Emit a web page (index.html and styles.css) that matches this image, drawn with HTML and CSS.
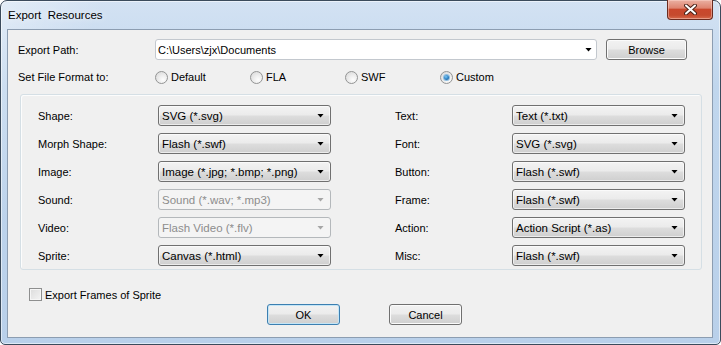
FILE: index.html
```html
<!doctype html>
<html lang="en">
  <head>
    <meta charset="UTF-8" />
    <title>Export Resources</title>
    <link rel="stylesheet" href="styles.css">
  </head>
  <body>
    <div class="window">
      <!-- Title bar -->
      <div class="titlebar">
        <span class="title">Export&nbsp; Resources</span>
        <div class="close-btn">
          <svg width="13" height="11" viewBox="0 0 13 11">
            <path d="M2 1.5 L11 9.5 M11 1.5 L2 9.5" stroke="#4a2218" stroke-width="4" stroke-linecap="round" />
            <path d="M2 1.5 L11 9.5 M11 1.5 L2 9.5" stroke="#fff" stroke-width="2" stroke-linecap="round" />
          </svg>
        </div>
      </div>

      <div class="client">
        <!-- Export path -->
        <div class="path-row">
          <span class="row-label">Export Path:</span>
          <div class="combo edit">C:\Users\zjx\Documents<span class="arrow"></span></div>
          <button class="btn browse">Browse</button>
        </div>

        <!-- Format radios -->
        <div class="format-row">
          <span class="row-label">Set File Format to:</span>
          <label class="radio-item"><span class="radio"></span>Default</label>
          <label class="radio-item"><span class="radio"></span>FLA</label>
          <label class="radio-item"><span class="radio"></span>SWF</label>
          <label class="radio-item"><span class="radio checked"></span>Custom</label>
        </div>

        <!-- Per-type formats -->
        <div class="group">
          <div class="format-grid">
            <span class="field-label">Shape:</span>
            <div class="combo">SVG (*.svg)<span class="arrow"></span></div>
            <span></span>
            <span class="field-label">Text:</span>
            <div class="combo">Text (*.txt)<span class="arrow"></span></div>

            <span class="field-label">Morph Shape:</span>
            <div class="combo">Flash (*.swf)<span class="arrow"></span></div>
            <span></span>
            <span class="field-label">Font:</span>
            <div class="combo">SVG (*.svg)<span class="arrow"></span></div>

            <span class="field-label">Image:</span>
            <div class="combo">Image (*.jpg; *.bmp; *.png)<span class="arrow"></span></div>
            <span></span>
            <span class="field-label">Button:</span>
            <div class="combo">Flash (*.swf)<span class="arrow"></span></div>

            <span class="field-label">Sound:</span>
            <div class="combo disabled">Sound (*.wav; *.mp3)<span class="arrow"></span></div>
            <span></span>
            <span class="field-label">Frame:</span>
            <div class="combo">Flash (*.swf)<span class="arrow"></span></div>

            <span class="field-label">Video:</span>
            <div class="combo disabled">Flash Video (*.flv)<span class="arrow"></span></div>
            <span></span>
            <span class="field-label">Action:</span>
            <div class="combo">Action Script (*.as)<span class="arrow"></span></div>

            <span class="field-label">Sprite:</span>
            <div class="combo">Canvas (*.html)<span class="arrow"></span></div>
            <span></span>
            <span class="field-label">Misc:</span>
            <div class="combo">Flash (*.swf)<span class="arrow"></span></div>
          </div>
        </div>

        <label class="check-row"><span class="checkbox"></span>Export Frames of Sprite</label>

        <div class="dialog-buttons">
          <button class="btn default">OK</button>
          <button class="btn">Cancel</button>
        </div>
      </div>
    </div>
  </body>
</html>
```

FILE: styles.css
```css
body {
  margin: 0;
  font-family: 'Liberation Sans', Arial, sans-serif;
  font-size: 11px;
  color: #000;
  background: #fff;
}

/* Window frame */
.window {
  box-sizing: border-box;
  width: 721px;
  height: 345px;
  border: 1px solid #3b4b5c;
  border-radius: 7px 7px 5px 5px;
  padding: 0 7px 6px 6px;
  background:
    linear-gradient(115deg, rgba(255, 255, 255, 0.35) 0%, rgba(255, 255, 255, 0) 12%),
    linear-gradient(180deg, #d3e2f3 0%, #c0d6ed 25%, #b9d0ea 100%);
  box-shadow: inset 0 0 0 1px rgba(255, 255, 255, 0.55);
}

.titlebar {
  height: 28px;
  display: flex;
  align-items: flex-start;
  justify-content: space-between;
}

.title {
  font-size: 11.5px;
  margin: 8px 0 0 1px;
  text-shadow: 0 0 6px rgba(255, 255, 255, 0.9);
}

.close-btn {
  box-sizing: border-box;
  width: 46px;
  height: 20px;
  margin-top: -1px;
  border: 1px solid #6b2b1f;
  border-top: none;
  border-radius: 0 0 4px 4px;
  background: linear-gradient(180deg, #eab0a2 0%, #de8470 42%, #c9472c 50%, #c54a2e 80%, #d66a4c 100%);
  box-shadow: inset 0 0 0 1px rgba(255, 220, 210, 0.45);
  display: flex;
  align-items: center;
  justify-content: center;
}

/* Client area */
.client {
  box-sizing: border-box;
  width: 706px;
  height: 309px;
  border: 1px solid #8c9db1;
  background: #f0f0f0;
}

.path-row {
  display: flex;
  align-items: center;
  height: 21px;
  margin-top: 9px;
  padding-left: 10px;
}

.row-label {
  width: 137px;
  flex: none;
}

.combo {
  box-sizing: border-box;
  height: 21px;
  display: flex;
  align-items: center;
  padding: 0 6px 0 3px;
  font-size: 11.5px;
  border: 1px solid #707070;
  border-radius: 3px;
  background: linear-gradient(180deg, #f3f3f3 0%, #ebebeb 48%, #dddddd 52%, #cfcfcf 100%);
  box-shadow: inset 0 0 0 1px rgba(255, 255, 255, 0.6);
  white-space: nowrap;
}

.arrow {
  width: 7px;
  height: 4px;
  margin-left: auto;
  background: #000;
  clip-path: polygon(0 0, 100% 0, 50% 100%);
}

.combo.edit {
  width: 442px;
  font-size: 11px;
  background: #fff;
  border-color: #c3c8ce;
  box-shadow: none;
  padding: 0 4px 0 2px;
}

.combo.disabled {
  color: #8d8d8d;
  border-color: #b4b8bb;
  background: #f4f4f4;
  box-shadow: none;
}

.combo.disabled .arrow {
  background: #a6a6a6;
}

.btn {
  box-sizing: border-box;
  height: 21px;
  font-family: inherit;
  font-size: 11px;
  color: #000;
  border: 1px solid #707070;
  border-radius: 3px;
  background: linear-gradient(180deg, #f2f2f2 0%, #ebebeb 48%, #dddddd 52%, #cfcfcf 100%);
  box-shadow: inset 0 0 0 1px #fbfbfb;
  padding: 0;
}

.browse {
  width: 81px;
  margin-left: 9px;
}

/* Radio row */
.format-row {
  display: flex;
  align-items: center;
  height: 14px;
  margin-top: 10px;
  padding-left: 10px;
}

.radio-item {
  width: 95px;
  display: flex;
  align-items: center;
}

.radio {
  box-sizing: border-box;
  width: 13px;
  height: 13px;
  margin-right: 3px;
  border: 1px solid #939494;
  border-radius: 50%;
  background: radial-gradient(circle at 65% 70%, #fdfdfd 0%, #ececec 45%, #d6d6d6 100%);
  display: flex;
  align-items: center;
  justify-content: center;
}

.radio.checked:after {
  content: '';
  width: 5px;
  height: 5px;
  border-radius: 50%;
  background: radial-gradient(circle at 40% 35%, #7cc7f2 0%, #2a7fc3 55%, #174f80 100%);
  box-shadow: 0 0 0 1px #8fbde0;
}

/* Group box */
.group {
  margin: 10px 10px 0 12px;
  padding: 10px 0 3px 17px;
  border: 1px solid #d5dfe5;
  border-radius: 3px;
  box-shadow: inset 1px 1px 0 #fcfcfc;
}

.format-grid {
  display: grid;
  grid-template-columns: 120px 173px 64px 117px 173px;
  grid-auto-rows: 21px;
  row-gap: 7px;
  align-items: center;
}

/* Bottom */
.check-row {
  display: flex;
  align-items: center;
  height: 13px;
  margin-top: 18px;
  padding-left: 21px;
}

.checkbox {
  box-sizing: border-box;
  width: 13px;
  height: 13px;
  margin-right: 3px;
  border: 1px solid #8e8f8f;
  background: linear-gradient(135deg, #dcdcdc 0%, #f4f4f4 100%);
  box-shadow: inset 0 0 0 1px #f6f6f6;
}

.dialog-buttons {
  display: flex;
  gap: 49px;
  margin-top: 3px;
  padding-left: 259px;
}

.dialog-buttons .btn {
  width: 73px;
}

.btn.default {
  border-color: #3c7fb1;
  box-shadow: inset 0 0 0 1px #c4e5f6;
}
```
